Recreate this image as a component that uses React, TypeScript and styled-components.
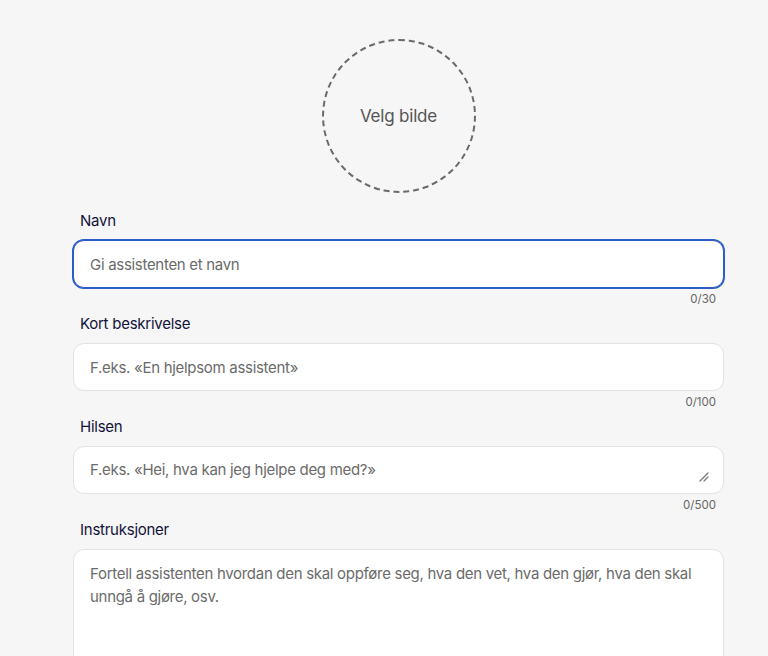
import React from 'react';
import styled, { createGlobalStyle } from 'styled-components';

const GlobalStyle = createGlobalStyle`
  html, body {
    margin: 0;
    padding: 0;
    background: #f6f6f6;
    font-family: Inter, "Noto Sans", sans-serif;
    overflow: hidden;
  }
  * { box-sizing: border-box; }
`;

type Field = {
  label: string;
  placeholder: string;
  max?: number;
  kind: 'input' | 'textarea' | 'big';
  focused?: boolean;
};

const fields: Field[] = [
  { label: 'Navn', placeholder: 'Gi assistenten et navn', max: 30, kind: 'input', focused: true },
  { label: 'Kort beskrivelse', placeholder: 'F.eks. «En hjelpsom assistent»', max: 100, kind: 'input' },
  { label: 'Hilsen', placeholder: 'F.eks. «Hei, hva kan jeg hjelpe deg med?»', max: 500, kind: 'textarea' },
  {
    label: 'Instruksjoner',
    placeholder: 'Fortell assistenten hvordan den skal oppføre seg, hva den vet, hva den gjør, hva den skal unngå å gjøre, osv.',
    kind: 'big',
  },
];

function ResizeGrip() {
  return (
    <Grip width="10" height="10" viewBox="0 0 10 10">
      <path d="M1 9 L9 1 M5 9 L9 5" stroke="#777" strokeWidth="1.2" strokeLinecap="round" />
    </Grip>
  );
}

function App() {
  return (
    <Page>
      <GlobalStyle />
      <Form>
        <AvatarRow>
          <AvatarButton type="button">Velg bilde</AvatarButton>
        </AvatarRow>
        {fields.map((f) => (
          <FieldBlock key={f.label}>
            <Label>{f.label}</Label>
            {f.kind === 'input' && <TextInput $focused={f.focused} placeholder={f.placeholder} />}
            {f.kind === 'textarea' && (
              <AreaWrap>
                <TextArea rows={1} placeholder={f.placeholder} />
                <ResizeGrip />
              </AreaWrap>
            )}
            {f.kind === 'big' && <BigArea placeholder={f.placeholder} />}
            {f.max !== undefined && <Counter>0/{f.max}</Counter>}
          </FieldBlock>
        ))}
      </Form>
    </Page>
  );
}

export default App;

const Page = styled.main`
  min-height: 656px;
  padding: 39px 0 0 73px;
`;

const Form = styled.div`
  width: 651px;
  display: flex;
  flex-direction: column;
`;

const AvatarRow = styled.div`
  display: flex;
  justify-content: center;
  margin-bottom: 17px;
`;

const AvatarButton = styled.button`
  width: 154px;
  height: 154px;
  border-radius: 50%;
  border: 2px dashed #6a6a6a;
  background: transparent;
  font-family: inherit;
  font-size: 17px;
  letter-spacing: -0.2px;
  color: #555;
  cursor: pointer;
`;

const FieldBlock = styled.div`
  display: flex;
  flex-direction: column;
  margin-bottom: 6px;
`;

const Label = styled.label`
  padding-left: 7px;
  font-size: 15px;
  letter-spacing: -0.25px;
  line-height: 20px;
  color: #12123a;
  margin-top: 1px;
  margin-bottom: 9px;
`;

const fieldBase = `
  width: 100%;
  background: #fff;
  border: 1px solid #e2e2e2;
  border-radius: 11px;
  font-family: Inter, "Noto Sans", sans-serif;
  font-size: 15px;
  letter-spacing: -0.3px;
  color: #222;
  outline: none;
  &::placeholder { color: #6b6b6b; }
`;

const TextInput = styled.input<{ $focused?: boolean }>`
  ${fieldBase}
  height: 48px;
  padding: 0 16px;
  ${(p) => p.$focused && `
    border-color: #2c5cc5;
    box-shadow: 0 0 0 1px #2c5cc5;
  `}
`;

const AreaWrap = styled.div`
  position: relative;
  display: flex;
`;

const Grip = styled.svg`
  position: absolute;
  right: 15px;
  bottom: 12px;
  pointer-events: none;
`;

const TextArea = styled.textarea`
  ${fieldBase}
  height: 48px;
  padding: 11px 16px;
  line-height: 24px;
  resize: none;
`;

const BigArea = styled.textarea`
  ${fieldBase}
  height: 160px;
  padding: 12px 16px;
  line-height: 23px;
  resize: none;
`;

const Counter = styled.div`
  align-self: flex-end;
  padding-right: 8px;
  margin-top: 3px;
  font-size: 11.5px;
  line-height: 16px;
  color: #666;
`;
